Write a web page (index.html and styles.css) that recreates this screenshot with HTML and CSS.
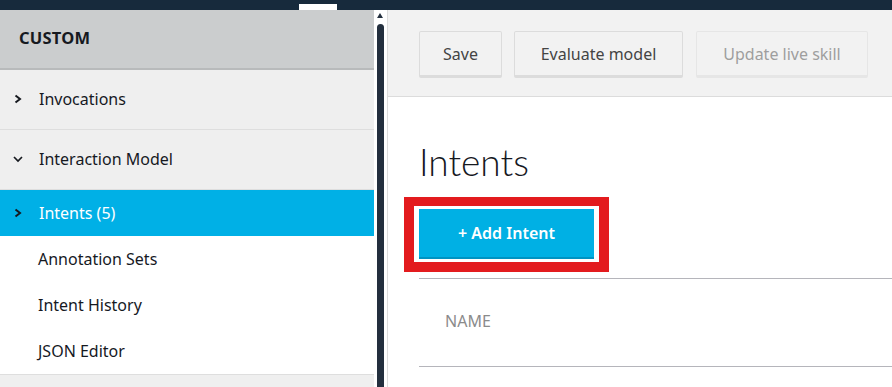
FILE: index.html
```html
<!doctype html>
<html lang="en">
<head>
  <meta charset="UTF-8" />
  <meta name="viewport" content="width=device-width, initial-scale=1" />
  <title>Intents</title>
  <link rel="stylesheet" href="styles.css">
</head>
<body>
  <div class="topbar">
    <span class="topbar-tab"></span>
  </div>
  <div class="app">
    <div class="sidebar">
      <div class="side-head">CUSTOM</div>
      <div class="side-row top">
        <svg class="chev" width="10" height="12" viewBox="0 0 10 12"><path d="M2.5 2.5 L7 6 L2.5 9.5" fill="none" stroke="#16191f" stroke-width="2"/></svg>
        <span>Invocations</span>
      </div>
      <div class="side-row top">
        <svg class="chev" width="10" height="10" viewBox="0 0 10 10"><path d="M1 3 L5 7 L9 3" fill="none" stroke="#16191f" stroke-width="1.7"/></svg>
        <span>Interaction Model</span>
      </div>
      <div class="side-row active">
        <svg class="chev" width="10" height="12" viewBox="0 0 10 12"><path d="M2.5 2.5 L7 6 L2.5 9.5" fill="none" stroke="#16191f" stroke-width="2"/></svg>
        <span>Intents (5)</span>
      </div>
      <div class="side-row sub">Annotation Sets</div>
      <div class="side-row sub">Intent History</div>
      <div class="side-row sub">JSON Editor</div>
      <div class="side-rest"></div>
    </div>
    <div class="scrollbar">
      <span class="scroll-up"></span>
      <span class="scroll-thumb"></span>
    </div>
    <div class="main">
      <div class="toolbar">
        <button class="btn">Save</button>
        <button class="btn">Evaluate model</button>
        <button class="btn" disabled>Update live skill</button>
      </div>
      <div class="content">
        <h1>Intents</h1>
        <div class="highlight">
          <button class="btn-primary">+ Add Intent</button>
        </div>
        <div class="table-head">
          <span>NAME</span>
        </div>
      </div>
    </div>
  </div>
</body>
</html>
```

FILE: styles.css
```css
body {
  margin: 0;
  font-family: "Noto Sans", "Open Sans", sans-serif;
  color: #16191f;
  height: 387px;
  overflow: hidden;
  background: #fff;
}
.topbar {
  height: 10px;
  background-color: #172a3c;
  display: flex;
  align-items: flex-end;
}
.topbar-tab {
  margin-left: 299px;
  width: 38px;
  height: 6px;
  background: #fff;
}
.app {
  display: flex;
  height: 377px;
}
.sidebar {
  width: 374px;
  flex: none;
  display: flex;
  flex-direction: column;
}
.side-head {
  height: 60px;
  box-sizing: border-box;
  background: #cbcdce;
  border-bottom: 2px solid #b8babb;
  padding: 0 0 3px 19px;
  display: flex;
  align-items: center;
  font-weight: 700;
  font-size: 16.5px;
  letter-spacing: 0.2px;
}
.side-row {
  display: flex;
  align-items: center;
  height: 46px;
  font-size: 16px;
  padding-left: 13px;
}
.side-row .chev {
  margin-right: 16px;
}
.side-row.top {
  height: 60px;
  box-sizing: border-box;
  background: #efefef;
  border-bottom: 1px solid #dedede;
  padding-bottom: 1px;
}
.side-row.active {
  background: #00b0e6;
  color: #fff;
}
.side-row.sub {
  padding-left: 38px;
}
.side-rest {
  flex: 1;
  background: #efefef;
  border-top: 1px solid #dedede;
}
.scrollbar {
  width: 14px;
  flex: none;
  box-sizing: border-box;
  border-right: 1px solid #dcdcdc;
  display: flex;
  flex-direction: column;
  align-items: flex-start;
  padding-left: 3px;
}
.scroll-up {
  margin-top: 3px;
  width: 0;
  height: 0;
  border-left: 3.5px solid transparent;
  border-right: 3.5px solid transparent;
  border-bottom: 5px solid #232f3e;
}
.scroll-thumb {
  margin-top: 6px;
  flex: 1;
  width: 7px;
  background: #232f3e;
  border-radius: 3.5px 3.5px 0 0;
}
.main {
  flex: 1;
  min-width: 0;
}
.toolbar {
  height: 87px;
  background: #f2f2f2;
  border-bottom: 1px solid #dcdcdc;
  box-sizing: border-box;
  display: flex;
  align-items: flex-start;
  gap: 12px;
  padding: 21px 0 0 31px;
}
.btn {
  font-family: inherit;
  font-size: 16px;
  color: #444;
  background: #f2f2f2;
  border: 1px solid #dcdcdc;
  border-bottom: 3px solid #dcdcdc;
  border-radius: 2px;
  height: 47px;
  padding: 0 20px;
}
.btn:nth-child(1) { width: 83px; }
.btn:nth-child(2) { width: 169px; }
.btn:nth-child(3) { width: 172px; margin-left: 1px; }
.btn[disabled] {
  color: #9e9e9e;
  border-color: #e6e6e6;
}
.content {
  padding-left: 31px;
}
.content h1 {
  margin: 43px 0 13px;
  font-family: Lato, "Noto Sans", sans-serif;
  font-size: 37px;
  line-height: 44px;
  font-weight: 300;
  color: #16191f;
}
.highlight {
  display: inline-block;
  margin-left: -15px;
  border: 10px solid #e31b1e;
  border-top-width: 9px;
  padding: 3px 5px;
}
.btn-primary {
  display: block;
  width: 175px;
  height: 50px;
  font-family: inherit;
  font-size: 16px;
  font-weight: 600;
  color: #fff;
  background: #00b0e4;
  border: none;
  border-bottom: 2px solid #0093c2;
  padding: 0;
}
.table-head {
  margin-top: 6px;
  height: 89px;
  box-sizing: border-box;
  padding: 0 0 4px 26px;
  border-top: 1px solid #b5b5bb;
  border-bottom: 1px solid #b5b5bb;
  display: flex;
  align-items: center;
  font-size: 16px;
  color: #8b8b8b;
}
```
